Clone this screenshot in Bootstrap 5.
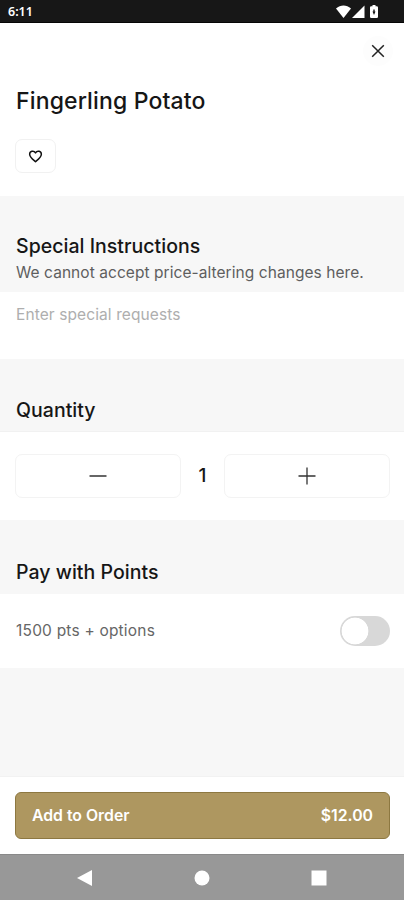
<!DOCTYPE html>
<html lang="en">
<head>
<meta charset="utf-8">
<meta name="viewport" content="width=device-width, initial-scale=1">
<title>Fingerling Potato</title>
<link href="https://cdn.jsdelivr.net/npm/bootstrap@5.3.0/dist/css/bootstrap.min.css" rel="stylesheet">
<style>
body { font-family: Inter, "Liberation Sans", sans-serif; color: #161616; background: #f7f7f7; height: 900px; overflow: hidden; }
svg { display: block; }
.status { height: 23px; background: #171717; border-bottom: 1px solid #050505; font: 600 12.500px/22px "Noto Sans", sans-serif; padding: 2px 24px 0 8px; }
.hero { height: 173px; padding: 13px 16px 0; }
.close-btn { width: 30px; height: 30px; margin-right: -5px; background: #fdfdfd; }
.item-name { font-size: 23px; line-height: 28px; font-weight: 500; margin: 21px 0 24px; letter-spacing: .15px; }
.fav { width: 41px; height: 34px; border: 1px solid #f1f1f1; border-radius: 7px; margin-left: -1px; }
.section-head { padding: 0 16px; }
.section-head h2 { font-size: 19.500px; line-height: 24px; font-weight: 500; margin: 0; letter-spacing: .03px; }
.head-notes { height: 96px; padding-top: 38px; }
.head-notes p { font-size: 15.500px; line-height: 20px; color: #5e5e5e; padding-top: 5px; white-space: nowrap; letter-spacing: .06px; }
.notes { height: 67px; padding: 12px 16px; font-size: 15.500px; line-height: 22px; border: 0; resize: none; border-radius: 0; letter-spacing: .1px; }
.notes::placeholder { color: #aeaeae; }
.head-qty { height: 72px; padding-top: 39px; }
.qty { height: 89px; padding: 0 14px 0 15px; border-top: 1px solid #f1f1f1; }
.step { height: 44px; border: 1px solid #f3f3f3; border-radius: 7px; flex: 1 1 0; }
.count { width: 43px; font-size: 19px; font-weight: 500; }
.head-pay { height: 74px; padding-top: 40px; }
.pay { height: 74px; padding: 0 14px 0 16px; font-size: 15.500px; letter-spacing: .2px; color: #666; }
.pay .form-check-input { width: 50px; height: 30px; margin: 0; border: 0; background-color: #d8d8d8; background-image: radial-gradient(circle at 15px 15px, #fff 13px, #d8d8d8 13.700px); background-position: 0 0; background-size: 100% 100%; }
.checkout { height: 78px; padding: 15px 14px 0 15px; border-top: 1px solid #f2f2f2; }
.add { height: 47px; padding: 0 16px; background: #ae9760; border: 1px solid #8d7841; border-radius: 6px; font-size: 15.800px; font-weight: 600; }
.add:hover { background: #a48d56; }
.sysnav { height: 46px; background: #989898; border-top: 1px solid #898989; padding: 0 77px; }
</style>
</head>
<body class="d-flex flex-column">
<div class="status d-flex align-items-center justify-content-between text-white flex-shrink-0">
  <span>6:11</span>
  <svg width="44" height="14" viewBox="0 0 44 14" fill="#fff"><path d="M0 3.500C4.500-.5 10.500-.5 15 3.500L7.500 13z"/><path d="M28.500.5V13H16z"/><path fill-rule="evenodd" d="M36.500 0h3v1.200h1.200q1.300 0 1.300 1.300v9.200q0 1.300-1.300 1.300h-5.400q-1.300 0-1.300-1.300V2.500q0-1.300 1.300-1.300h1.200zM37.300 4.500v2h-.8l1.500 3.500 1.500-3.500h-.8v-2z"/></svg>
</div>
<header class="hero bg-white flex-shrink-0">
  <button class="close-btn btn p-0 border-0 rounded-circle d-flex align-items-center justify-content-center ms-auto" aria-label="Close">
    <svg width="14" height="14" viewBox="0 0 14 14" stroke="#222" stroke-width="1.500"><path d="M1.200 1.200l11.600 11.600M12.800 1.200L1.200 12.800"/></svg>
  </button>
  <h1 class="item-name">Fingerling Potato</h1>
  <button class="fav btn bg-white p-0 d-flex align-items-center justify-content-center" aria-label="Favorite">
    <svg width="15" height="13" viewBox="0 0 15 14" fill="none" stroke="#111" stroke-width="1.600" stroke-linejoin="round"><path d="M7.500 12.600C4.300 9.900 1.200 7.700 1.200 4.500c0-3.500 4.500-4.500 6.300-1.300 1.800-3.200 6.300-2.200 6.300 1.300 0 3.200-3.100 5.400-6.300 8.100z"/></svg>
  </button>
</header>
<div class="section-head head-notes flex-shrink-0">
  <h2>Special Instructions</h2>
  <p class="m-0">We cannot accept price-altering changes here.</p>
</div>
<textarea class="notes form-control bg-white flex-shrink-0 shadow-none" placeholder="Enter special requests"></textarea>
<div class="section-head head-qty flex-shrink-0"><h2>Quantity</h2></div>
<div class="qty bg-white d-flex align-items-center flex-shrink-0">
  <button class="step btn bg-white p-0 d-flex align-items-center justify-content-center" aria-label="Decrease">
    <svg width="18" height="18" viewBox="0 0 18 18" stroke="#333" stroke-width="1.500"><path d="M.5 9h17"/></svg>
  </button>
  <span class="count text-center">1</span>
  <button class="step btn bg-white p-0 d-flex align-items-center justify-content-center" aria-label="Increase">
    <svg width="18" height="18" viewBox="0 0 18 18" stroke="#333" stroke-width="1.300"><path d="M.5 9h17M9 .5v17"/></svg>
  </button>
</div>
<div class="section-head head-pay flex-shrink-0"><h2>Pay with Points</h2></div>
<div class="pay bg-white d-flex align-items-center justify-content-between flex-shrink-0">
  <label for="points">1500 pts + options</label>
  <div class="form-check form-switch m-0 p-0 d-flex"><input class="form-check-input shadow-none" type="checkbox" role="switch" id="points"></div>
</div>
<footer class="mt-auto flex-shrink-0">
  <div class="checkout bg-white">
    <button class="add btn w-100 d-flex align-items-center justify-content-between text-white"><span>Add to Order</span><span>$12.00</span></button>
  </div>
  <nav class="sysnav d-flex align-items-center justify-content-between">
    <svg width="16" height="16" viewBox="0 0 16 16" fill="#fff"><path d="M15 0v16L0 8z"/></svg>
    <svg width="16" height="16" viewBox="0 0 16 16" fill="#fff"><circle cx="8" cy="8" r="7.500"/></svg>
    <svg width="16" height="16" viewBox="0 0 16 16" fill="#fff"><path d="M.5.500h15v15H.500z"/></svg>
  </nav>
</footer>
<script src="https://cdn.jsdelivr.net/npm/bootstrap@5.3.0/dist/js/bootstrap.bundle.min.js"></script>
</body>
</html>
